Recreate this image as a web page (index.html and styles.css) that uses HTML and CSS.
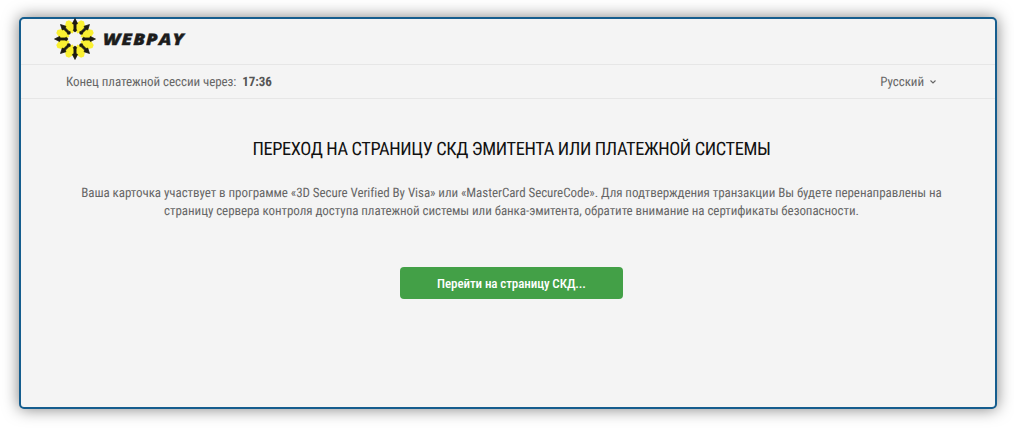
FILE: index.html
```
<!DOCTYPE html>
<html lang="ru">
<head>
    <meta charset="UTF-8">
    <meta name="viewport" content="width=device-width, initial-scale=1.0">
    <title>WEBPAY</title>
    <link rel="stylesheet" href="styles.css">
</head>
<body>
    <div class="page">
        <header class="header">
            <svg class="logo-icon" width="42" height="42" viewBox="-21 -21 42 42">
                <defs>
                    <path id="petal" d="M0 -6 L-3.4 -9 L-4.8 -15 L-1.6 -19.6 L1.6 -19.6 L4.8 -15 L3.4 -9 Z"/>
                    <path id="arrow" d="M-1.1 -10 V-14.6 L-2.6 -15.4 L0 -20.5 L2.6 -15.4 L1.1 -14.6 V-10 L1.8 -8.5 L0 -7 L-1.8 -8.5 Z"/>
                </defs>
                <g fill="#faf032">
                    <use href="#petal" transform="rotate(22.5)"/>
                    <use href="#petal" transform="rotate(67.5)"/>
                    <use href="#petal" transform="rotate(112.5)"/>
                    <use href="#petal" transform="rotate(157.5)"/>
                    <use href="#petal" transform="rotate(202.5)"/>
                    <use href="#petal" transform="rotate(247.5)"/>
                    <use href="#petal" transform="rotate(292.5)"/>
                    <use href="#petal" transform="rotate(337.5)"/>
                </g>
                <g fill="#1c1a12" stroke="#1c1a12" stroke-width="0.7">
                    <use href="#arrow"/>
                    <use href="#arrow" transform="rotate(45)"/>
                    <use href="#arrow" transform="rotate(90)"/>
                    <use href="#arrow" transform="rotate(135)"/>
                    <use href="#arrow" transform="rotate(180)"/>
                    <use href="#arrow" transform="rotate(225)"/>
                    <use href="#arrow" transform="rotate(270)"/>
                    <use href="#arrow" transform="rotate(315)"/>
                </g>
            </svg>
            <span class="logo-text">WEBPAY</span>
        </header>
        <div class="session">
            <div class="timer">Конец платежной сессии через: <b>17:36</b></div>
            <div class="lang">
                <span>Русский</span>
                <svg width="6" height="4" viewBox="0 0 6 4"><path d="M0.5 0.5 L3 3 L5.5 0.5" fill="none" stroke="#666" stroke-width="1.1"/></svg>
            </div>
        </div>
        <main class="content">
            <h1>ПЕРЕХОД НА СТРАНИЦУ СКД ЭМИТЕНТА ИЛИ ПЛАТЕЖНОЙ СИСТЕМЫ</h1>
            <p>Ваша карточка участвует в программе «3D Secure Verified By Visa» или «MasterCard SecureCode». Для подтверждения транзакции Вы будете перенаправлены на<br>страницу сервера контроля доступа платежной системы или банка-эмитента, обратите внимание на сертификаты безопасности.</p>
            <button class="btn" type="button">Перейти на страницу СКД...</button>
        </main>
    </div>
</body>
</html>
```
FILE: styles.css
```
* {
    box-sizing: border-box;
}

body {
    margin: 0;
    padding: 17px 17px 19px 19px;
    height: 428px;
    overflow: hidden;
    background-color: #fff;
    font-family: 'Roboto Condensed', Roboto, sans-serif;
    font-stretch: 75%;
    font-size: 13px;
    letter-spacing: -0.06px;
    text-rendering: geometricPrecision;
    color: #666;
}

.page {
    height: 392px;
    background-color: #f4f4f4;
    border: 2px solid #155d8e;
    border-radius: 5px;
    box-shadow: 0 0 16px rgba(0, 0, 0, 0.5);
}

.header {
    display: flex;
    align-items: flex-start;
    height: 46px;
    padding-left: 33px;
    border-bottom: 1px solid #e6e6e6;
}

.logo-icon {
    margin-top: -1px;
}

.logo-text {
    margin: 10px 0 0 7px;
    font-family: 'Open Sans', sans-serif;
    font-stretch: normal;
    font-size: 16px;
    line-height: 20px;
    font-weight: 800;
    font-style: italic;
    letter-spacing: 0.9px;
    color: #1c1c1c;
    -webkit-text-stroke: 0.4px #1c1c1c;
    transform: scaleX(1.17);
    transform-origin: left;
}

.session {
    display: flex;
    justify-content: space-between;
    align-items: center;
    height: 34px;
    padding: 2px 59px 0 45px;
    border-bottom: 1px solid #e6e6e6;
}

.timer b {
    margin-left: 3px;
    color: #555;
}

.lang {
    display: flex;
    align-items: center;
    gap: 6px;
}

.lang svg {
    margin-top: -2px;
}

.content {
    padding: 39px 0 0 7px;
    text-align: center;
}

h1 {
    margin: 0;
    font-size: 18.4px;
    line-height: 24px;
    font-weight: 400;
    letter-spacing: -0.38px;
    color: #111;
}

p {
    margin: 23px 0 0;
    line-height: 18px;
    white-space: nowrap;
}

.btn {
    display: block;
    width: 223px;
    height: 32px;
    margin: 46px auto 0;
    padding: 0;
    border: 0;
    border-radius: 4px;
    background-color: #43a047;
    color: #fff;
    font: inherit;
    font-stretch: 75%;
    font-weight: 500;
    letter-spacing: -0.1px;
}
```
